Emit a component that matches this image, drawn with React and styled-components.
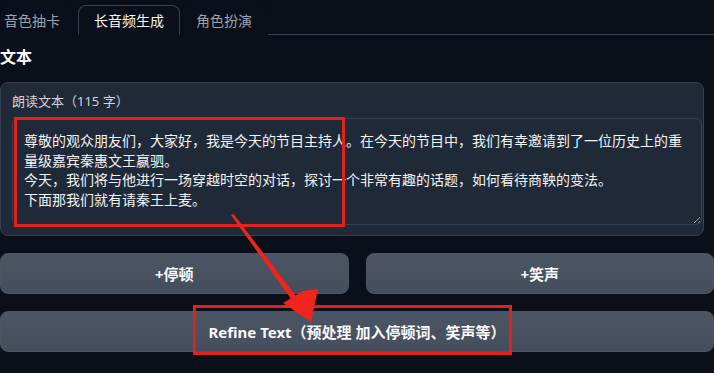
import React from "react";
import styled, { createGlobalStyle } from "styled-components";

const Global = createGlobalStyle`
  html, body { margin: 0; padding: 0; background: #0b0f19; }
  body { font-family: "Noto Sans", "Noto Sans CJK SC", sans-serif; color: #f3f4f6; }
  * { box-sizing: border-box; }
`;

const Page = styled.div`
  position: relative;
  width: 714px;
  height: 373px;
  overflow: hidden;
  background: #0b0f19;
`;

const TabBar = styled.div`
  display: flex;
  height: 35px;
  padding-top: 5px;
  border-bottom: 1px solid #374151;
`;

const Tab = styled.div`
  display: flex;
  align-items: center;
  justify-content: center;
  height: 30px;
  padding-left: ${(p) => (p.$first ? "3px" : "15px")};
  padding-right: ${(p) => (p.$first ? "17px" : "15px")};
  margin-bottom: -1px;
  font-size: 14px;
  color: ${(p) => (p.$active ? "#f9fafb" : "#9ca3af")};
  background: #0b0f19;
  border: 1px solid ${(p) => (p.$active ? "#374151" : "transparent")};
  border-bottom-color: ${(p) => (p.$active ? "#0b0f19" : "transparent")};
  border-radius: 8px 8px 0 0;
`;

const Heading = styled.div`
  font-size: 16px;
  font-weight: 700;
  color: #f9fafb;
  height: 40px;
  display: flex;
  align-items: center;
  padding-top: 2px;
`;

const Panel = styled.div`
  margin: 7px 10px 0 0;
  background: #1f2937;
  border: 1px solid #374151;
  border-radius: 8px;
  padding: 8px 1px 10px 11px;
  height: 154px;
`;

const Label = styled.div`
  font-size: 13px;
  color: #d1d5db;
  height: 20px;
  line-height: 20px;
  margin-bottom: 7px;
`;

const TextArea = styled.textarea`
  display: block;
  width: 690px;
  height: 107px;
  resize: vertical;
  background: #1f2937;
  border: 1px solid #374151;
  border-radius: 6px;
  color: #f3f4f6;
  font-family: "Noto Sans CJK SC", "Noto Sans", sans-serif;
  font-size: 14px;
  line-height: 19.5px;
  padding: 12px 11px;
  outline: none;
  overflow: hidden;
`;

const Row = styled.div`
  display: grid;
  grid-template-columns: 1fr 1fr;
  gap: 17px;
  margin-top: 17px;
`;

const Button = styled.button`
  display: flex;
  align-items: center;
  justify-content: center;
  height: 41px;
  width: 100%;
  border: 1px solid #4b5563;
  border-radius: 8px;
  background: linear-gradient(to bottom, #4b5563, #454e5c);
  color: #f9fafb;
  font-family: "Noto Sans", "Noto Sans CJK SC", sans-serif;
  font-size: 15px;
  font-weight: 700;
  margin-top: ${(p) => p.$mt || 0}px;
`;

const Overlay = styled.svg`
  position: absolute;
  left: 0;
  top: 0;
  pointer-events: none;
`;

const text =
  "尊敬的观众朋友们，大家好，我是今天的节目主持人。在今天的节目中，我们有幸邀请到了一位历史上的重量级嘉宾秦惠文王嬴驷。\n今天，我们将与他进行一场穿越时空的对话，探讨一个非常有趣的话题，如何看待商鞅的变法。\n下面那我们就有请秦王上麦。";

export default function App() {
  return (
    <Page>
      <Global />
      <TabBar>
        <Tab $first>音色抽卡</Tab>
        <Tab $active>长音频生成</Tab>
        <Tab>角色扮演</Tab>
      </TabBar>
      <Heading>文本</Heading>
      <Panel>
        <Label>朗读文本（115 字）</Label>
        <TextArea defaultValue={text} />
      </Panel>
      <Row>
        <Button>+停顿</Button>
        <Button>+笑声</Button>
      </Row>
      <Button $mt={17}>Refine Text（预处理 加入停顿词、笑声等）</Button>
      <Overlay width="714" height="373" viewBox="0 0 714 373">
        <rect x="15.5" y="118.5" width="328" height="107" fill="none" stroke="#e3211c" strokeWidth="3" />
        <rect x="194.5" y="306.5" width="316" height="47" fill="none" stroke="#e3211c" strokeWidth="3" />
        <polygon points="231,215 233.5,214 296,296 291,299" fill="#f0241c" />
        <polygon points="311,322 283,303 303,291 318,289" fill="#f0241c" />
      </Overlay>
    </Page>
  );
}
